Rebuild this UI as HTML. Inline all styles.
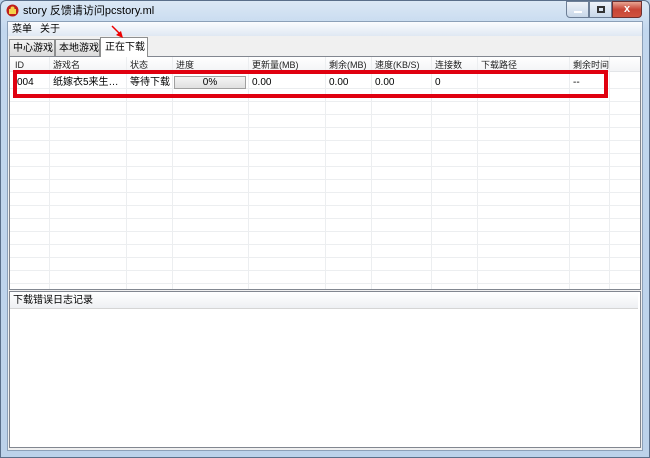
<!DOCTYPE html>
<html><head><meta charset="utf-8"><style>
*{margin:0;padding:0;box-sizing:border-box}
body{width:650px;height:458px;overflow:hidden;background:#b9d1ea;font-family:"Liberation Sans","Noto Sans CJK SC",sans-serif;font-size:10px;line-height:12px;color:#000;position:relative}
.a{position:absolute;white-space:nowrap}
.frame{left:0;top:0;width:650px;height:458px;background:linear-gradient(#dbe8f5,#c2d7ee 30px,#bcd2ea);border:1px solid #5a6f8a;border-radius:6px 6px 0 0}
.client{left:7px;top:21px;width:636px;height:430px;background:#f0f0f0;border:1px solid #8ca0b8}
.menu{left:8px;top:22px;width:634px;height:14px;background:linear-gradient(#fbfcfe,#dfe8f3)}
.tab{top:39px;height:17px;border:1px solid #8e8f8f;border-bottom:none;background:linear-gradient(#f2f2f2,#dcdcdc);padding:3px 0 0 3px;font-size:10px;line-height:12px}
.list{left:9px;top:56px;width:632px;height:234px;background:#fff;border:1px solid #828790}
.hd{left:10px;top:57px;width:630px;height:15px;background:linear-gradient(#fff,#f3f4f6);border-bottom:1px solid #e3e5e8}
.cl{top:57px;width:1px;height:232px;background:#eceef0}
.rl{left:10px;width:630px;height:1px;background:#eceef0}
.t{top:60px;font-size:9px;line-height:10px;color:#222}
.d{top:77px;font-size:10px;line-height:12px}
</style></head><body>
<div class="a frame"></div>
<svg class="a" style="left:6px;top:4px" width="13" height="13" viewBox="0 0 13 13"><circle cx="6.5" cy="6.5" r="6" fill="#c0201a"/><rect x="3" y="5" width="7" height="5" fill="#f4d24a"/><circle cx="6.5" cy="4.5" r="2" fill="#f4d24a"/></svg>
<div class="a" style="left:23px;top:4px;font-size:11px;line-height:14px">story 反馈请访问pcstory.ml</div>
<div class="a" style="left:566px;top:1px;width:23px;height:17px;border:1px solid #6d7f97;border-radius:0 0 0 4px;background:linear-gradient(#eef3f9,#c8d7e9)"><div class="a" style="left:7px;top:9px;width:8px;height:2px;background:#333;border:1px solid #fff"></div></div>
<div class="a" style="left:589px;top:1px;width:23px;height:17px;border:1px solid #6d7f97;background:linear-gradient(#eef3f9,#c8d7e9)"><div class="a" style="left:7px;top:4px;width:8px;height:7px;border:2px solid #333"></div></div>
<div class="a" style="left:612px;top:1px;width:30px;height:17px;border:1px solid #6d3030;border-radius:0 0 4px 0;background:linear-gradient(#e8a593,#c74536 50%,#d0533f);color:#fff;font-weight:bold;font-size:11px;text-align:center;line-height:15px">x</div>
<div class="a client"></div>
<div class="a menu"></div>
<div class="a" style="left:12px;top:24px">菜单</div>
<div class="a" style="left:40px;top:24px">关于</div>
<div class="a tab" style="left:9px;width:46px">中心游戏</div>
<div class="a tab" style="left:55px;width:45px">本地游戏</div>
<div class="a tab" style="left:100px;top:37px;height:20px;width:48px;background:#fff;z-index:2;padding-top:4px;padding-left:4px">正在下载</div>
<svg class="a" style="left:110px;top:25px;z-index:3" width="16" height="14" viewBox="0 0 16 14"><line x1="2" y1="1" x2="10" y2="9" stroke="#e00" stroke-width="1.5"/><polygon points="13,13 6,10 11,6" fill="#e00"/></svg>
<div class="a list"></div>
<div class="a hd"></div>
<div class="a cl" style="left:49px"></div><div class="a cl" style="left:126px"></div><div class="a cl" style="left:172px"></div><div class="a cl" style="left:248px"></div><div class="a cl" style="left:325px"></div><div class="a cl" style="left:371px"></div><div class="a cl" style="left:431px"></div><div class="a cl" style="left:477px"></div><div class="a cl" style="left:569px"></div><div class="a cl" style="left:609px"></div>
<div class="a rl" style="top:88px"></div><div class="a rl" style="top:101px"></div><div class="a rl" style="top:114px"></div><div class="a rl" style="top:127px"></div><div class="a rl" style="top:140px"></div><div class="a rl" style="top:153px"></div><div class="a rl" style="top:166px"></div><div class="a rl" style="top:179px"></div><div class="a rl" style="top:192px"></div><div class="a rl" style="top:205px"></div><div class="a rl" style="top:218px"></div><div class="a rl" style="top:231px"></div><div class="a rl" style="top:244px"></div><div class="a rl" style="top:257px"></div><div class="a rl" style="top:270px"></div><div class="a rl" style="top:283px"></div>
<div class="a t" style="left:15px">ID</div><div class="a t" style="left:53px">游戏名</div><div class="a t" style="left:130px">状态</div><div class="a t" style="left:176px">进度</div><div class="a t" style="left:252px">更新量(MB)</div><div class="a t" style="left:329px">剩余(MB)</div><div class="a t" style="left:375px">速度(KB/S)</div><div class="a t" style="left:435px">连接数</div><div class="a t" style="left:481px">下载路径</div><div class="a t" style="left:573px">剩余时间</div>
<div class="a d" style="left:17px">004</div><div class="a d" style="left:53px">纸嫁衣5来生…</div><div class="a d" style="left:130px">等待下载</div>
<div class="a" style="left:174px;top:76px;width:72px;height:13px;border:1px solid #a0a0a0;background:linear-gradient(#f4f4f4,#e0e0e0);text-align:center;font-size:10px;line-height:11px">0%</div>
<div class="a d" style="left:252px">0.00</div><div class="a d" style="left:329px">0.00</div><div class="a d" style="left:375px">0.00</div><div class="a d" style="left:435px">0</div><div class="a d" style="left:573px">--</div>
<div class="a" style="left:13px;top:70px;width:595px;height:28px;border:4px solid #e0000f"></div>
<div class="a" style="left:9px;top:291px;width:632px;height:157px;background:#fff;border:1px solid #828790"></div>
<div class="a" style="left:10px;top:292px;width:628px;height:17px;background:linear-gradient(#fff,#eef0f3);border-bottom:1px solid #d5d5d5"></div>
<div class="a" style="left:13px;top:295px;font-size:10px">下载错误日志记录</div>
</body></html>
